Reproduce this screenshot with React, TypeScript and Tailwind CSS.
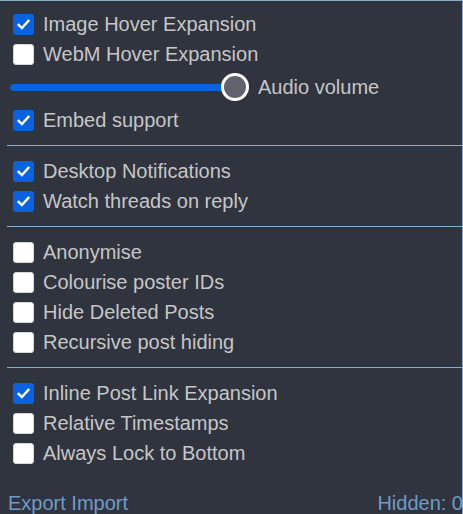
import React from "react";

function Check({ checked, label }: { checked: boolean; label: string }) {
  return (
    <label className="flex h-[30px] items-center">
      <span
        className={
          checked
            ? "ml-[6px] flex h-[21px] w-[21px] items-center justify-center rounded-[3px] bg-[#0b62e0]"
            : "ml-[6px] h-[21px] w-[21px] rounded-[3px] border border-[#d8d8d8] bg-white"
        }
      >
        {checked && (
          <svg width="15" height="15" viewBox="0 0 16 16">
            <path d="M2.8 8.4 L6.3 11.8 L13.2 4.2" fill="none" stroke="white" strokeWidth="2.6" strokeLinecap="square" />
          </svg>
        )}
      </span>
      <span className="ml-[9px]">{label}</span>
    </label>
  );
}

function Sep() {
  return <div className="my-[10px] h-px bg-[#8aaccb]" />;
}

export default function App() {
  return (
    <div
      className="h-[514px] w-[463px] overflow-hidden border-t border-r border-[#8aaccb] bg-[#30343f] pl-[7px] pt-[8px] text-[20px] leading-[24px] text-[#c6c6c6]"
      style={{ fontFamily: '"Liberation Sans", Arial, sans-serif' }}
    >
      <Check checked label="Image Hover Expansion" />
      <Check checked={false} label="WebM Hover Expansion" />
      <div className="flex h-[36px] items-center">
        <div className="relative ml-[3px] h-[28px] w-[239px]">
          <div className="absolute left-0 top-[11px] h-[7px] w-[225px] rounded-full bg-[#0b62e0]" />
          <div className="absolute left-[211px] top-0 h-[28px] w-[28px] rounded-full border-[3px] border-white bg-[#62616e]" />
        </div>
        <span className="ml-[9px]">Audio volume</span>
      </div>
      <Check checked label="Embed support" />
      <Sep />
      <Check checked label="Desktop Notifications" />
      <Check checked label="Watch threads on reply" />
      <Sep />
      <Check checked={false} label="Anonymise" />
      <Check checked={false} label="Colourise poster IDs" />
      <Check checked={false} label="Hide Deleted Posts" />
      <Check checked={false} label="Recursive post hiding" />
      <Sep />
      <Check checked label="Inline Post Link Expansion" />
      <Check checked={false} label="Relative Timestamps" />
      <Check checked={false} label="Always Lock to Bottom" />
      <div className="mt-[23px] flex items-center justify-between pl-px text-[#6f9cc6]">
        <span>Export Import</span>
        <span className="-mr-[1px]">Hidden: 0</span>
      </div>
    </div>
  );
}
